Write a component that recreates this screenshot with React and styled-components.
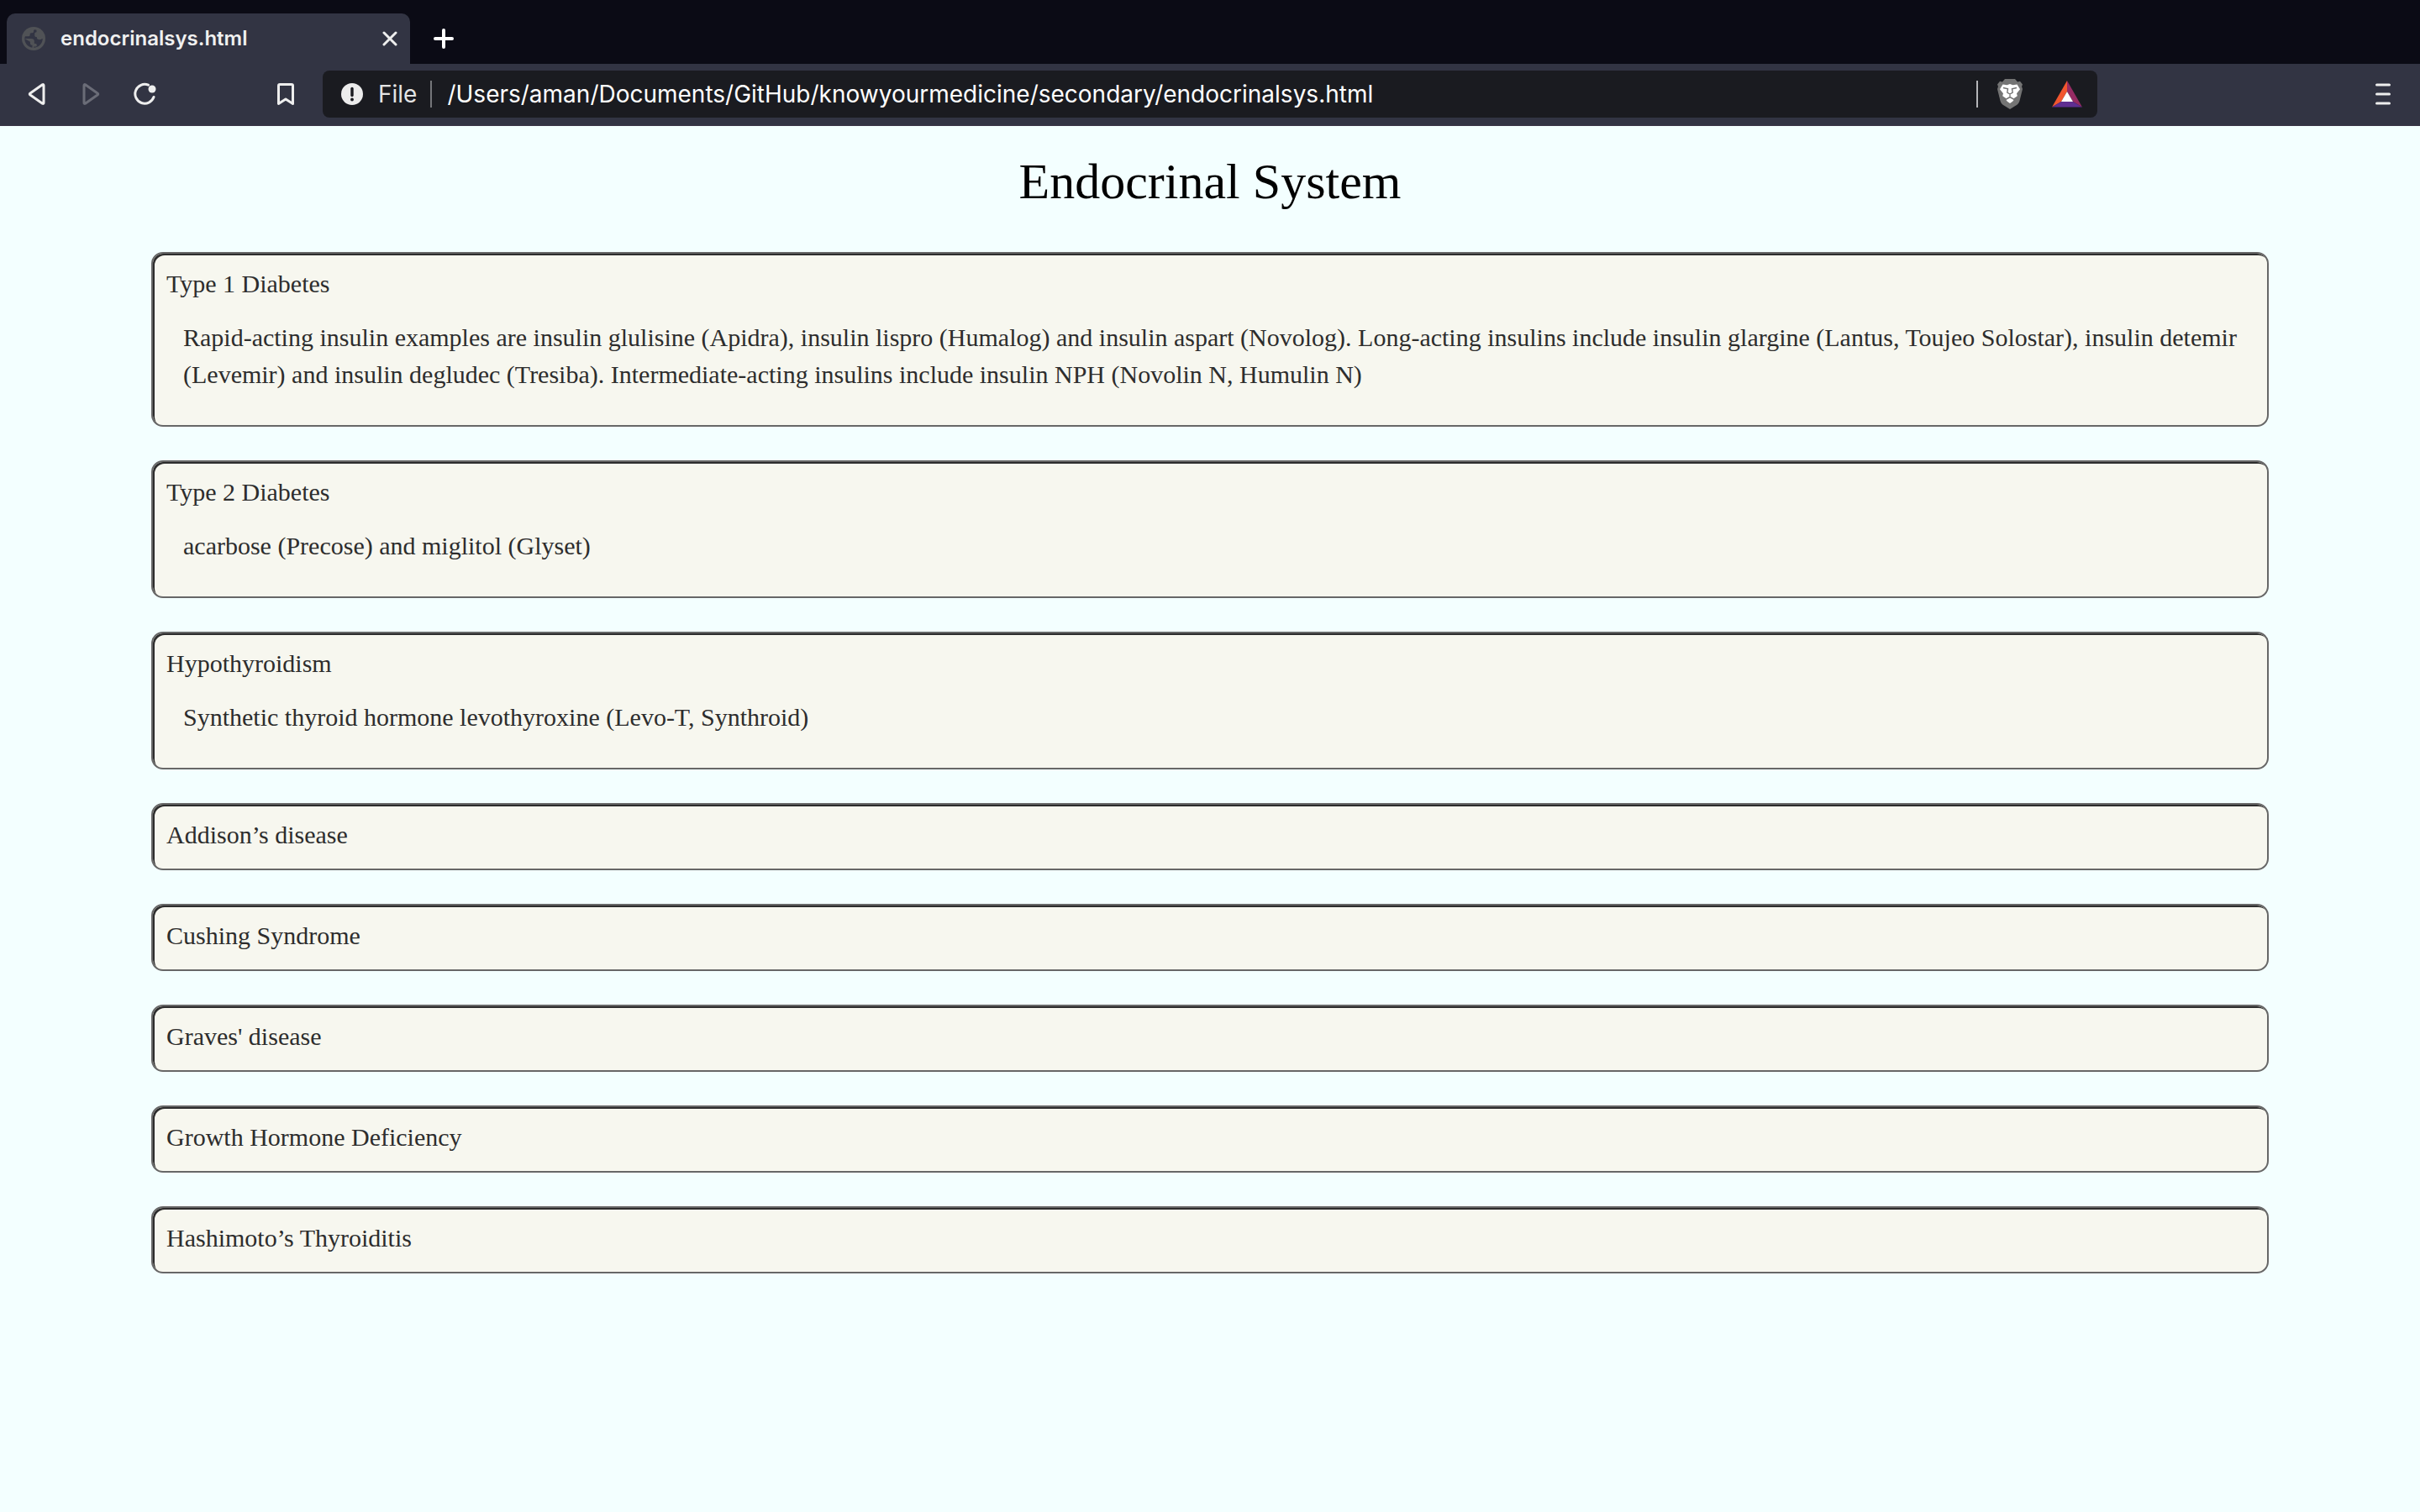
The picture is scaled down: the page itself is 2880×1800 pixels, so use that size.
import React from "react";
import styled, { createGlobalStyle } from "styled-components";

const ui = `Inter, "Liberation Sans", sans-serif`;
const serif = `"Liberation Serif", "Times New Roman", serif`;

const GlobalStyle = createGlobalStyle`
  *, *::before, *::after { box-sizing: border-box; }
  html { background: #f3ffff; }
  body { margin: 0; background: #f3ffff; }
`;

const TabStrip = styled.nav`
  display: flex;
  align-items: center;
  padding: 16px 8px 0;
  background: #0b0b15;
`;

const Tab = styled.div`
  display: flex;
  align-items: center;
  width: 480px;
  height: 60px;
  padding: 0 10px 0 18px;
  border-radius: 10px 10px 0 0;
  background: #323443;
`;

const TabTitle = styled.span`
  flex: 1;
  margin-left: 18px;
  color: #f0f0f0;
  font: 600 24px/32px ${ui};
`;

const IconButton = styled.button`
  display: flex;
  align-items: center;
  justify-content: center;
  width: ${(p) => p.$size || 64}px;
  height: ${(p) => Math.min(p.$size || 64, 56)}px;
  padding: 0;
  border: 0;
  background: transparent;
  color: #eeeeee;

  &:disabled { color: #6a6c77; }
`;

const NewTab = styled(IconButton)`
  margin-left: 20px;
  color: #ffffff;
`;

const Toolbar = styled.div`
  display: flex;
  align-items: center;
  padding: 8px 16px 9px 12px;
  border-bottom: 1px solid #393344;
  background: #323443;
`;

const NavButtons = styled.div`
  display: flex;
  width: 296px;
`;

const AddressBar = styled.div`
  display: flex;
  flex: 1;
  align-items: center;
  height: 56px;
  margin: 0 312px 0 12px;
  padding: 0 6px 0 22px;
  border-radius: 8px;
  background: #1a1b20;
`;

const Scheme = styled.label`
  margin: 0 16px 0 18px;
  color: #e4e4e4;
  font: 400 28px/36px ${ui};
`;

const Divider = styled.span`
  width: 2px;
  height: 32px;
  background: ${(p) => p.$color};
`;

const Address = styled.input`
  flex: 1;
  min-width: 0;
  padding: 0 18px;
  border: 0;
  outline: 0;
  background: transparent;
  color: #ffffff;
  font: 400 28px/36px ${ui};
`;

const Main = styled.main`
  padding: 32px 180px 40px;
  font-family: ${serif};
`;

const Title = styled.h1`
  margin: 0 0 50px;
  color: #000000;
  font-size: 60px;
  font-weight: 400;
  line-height: 68px;
  text-align: center;
`;

const CardList = styled.div`
  display: grid;
  gap: 40px;
`;

const Card = styled.section`
  padding: 14px 16px 18px;
  border: 2px solid #676767;
  border-radius: 14px;
  background: #f7f7ef;
  box-shadow: inset 2px 2px 0 #2d2d2d;
  color: #2d2d2d;
`;

const CardTitle = styled.h2`
  margin: 0;
  font-size: 30px;
  font-weight: 400;
  line-height: 44px;
`;

const CardText = styled.p`
  margin: 20px 0 20px 20px;
  font-size: 30px;
  line-height: 44px;
`;

const conditions = [
  {
    name: "Type 1 Diabetes",
    text: "Rapid-acting insulin examples are insulin glulisine (Apidra), insulin lispro (Humalog) and insulin aspart (Novolog). Long-acting insulins include insulin glargine (Lantus, Toujeo Solostar), insulin detemir (Levemir) and insulin degludec (Tresiba). Intermediate-acting insulins include insulin NPH (Novolin N, Humulin N)",
  },
  { name: "Type 2 Diabetes", text: "acarbose (Precose) and miglitol (Glyset)" },
  { name: "Hypothyroidism", text: "Synthetic thyroid hormone levothyroxine (Levo-T, Synthroid)" },
  { name: "Addison’s disease" },
  { name: "Cushing Syndrome" },
  { name: "Graves' disease" },
  { name: "Growth Hormone Deficiency" },
  { name: "Hashimoto’s Thyroiditis" },
];

const Stroke = ({ w, h, children, width = 3 }) => (
  <svg width={w} height={h} viewBox={`0 0 ${w} ${h}`} fill="none" stroke="currentColor"
    strokeWidth={width} strokeLinecap="round" strokeLinejoin="round" aria-hidden="true">
    {children}
  </svg>
);

const Globe = () => (
  <svg width="28" height="28" viewBox="0 0 28 28" aria-hidden="true">
    <circle cx="14" cy="14" r="14" fill="#505256" />
    <path fill="#323443" d="M15.500 3.200c-1.500 0-1.500 1-1.500 2.300 0 1.500-1.300 1.800-2.800 1.800-1.300 0-1.500.8-1.500 2.200 0 1.500-1.200 1.800-3 1.800H4c-.5 1.300-.7 2-.7 2.800H11c2.500 0 3.800 1.200 3.800 3.200v1.600c0 .9.500 1.200 1.300 1.200 1.300 0 1.700.6 1.700 1.800 0 1-.7 1.500-1.800 1.500h-1.800v1.300C20 24.700 24.700 20 24.700 14h-.6c-1 .8-2 1.200-3.300 1.200-2.700 0-3-1.400-3-3.100-2 0-2.600-.8-2.600-2.200V8.500c0-1.500.8-2.300 2.300-2.300V3.800c-.6-.3-1.300-.6-2-.6z" />
    <path fill="#323443" d="M3.300 14c0 5.500 4 10 9.200 10.700v-2.900c-1.600 0-2.600-1-2.600-2.600v-1.400z" />
  </svg>
);

const Info = () => (
  <svg width="26" height="26" viewBox="0 0 26 26" aria-hidden="true">
    <circle cx="13" cy="13" r="13" fill="#ececec" />
    <path d="M13 6.500v8" stroke="#1a1b20" strokeWidth="3.400" strokeLinecap="round" />
    <circle cx="13" cy="19.500" r="1.900" fill="#1a1b20" />
  </svg>
);

const Lion = () => (
  <svg width="32" height="36" viewBox="0 0 32 36" aria-hidden="true">
    <path fill="#747474" d="M10 0h12l3 3.400 3-.6 3 3.600-1 2.600 1 3-3.500 14c-.6 2.200-1.600 3.600-3.500 5L16 36l-8-5c-1.900-1.400-2.900-2.800-3.500-5L1 12l1-3-1-2.600 3-3.600 3 .6z" />
    <path fill="#fff" d="M7.500 6.500l5 .8L16 6l3.500 1.300 5-.8 3.500 5.700-4 5 .8 3-4.300 3-3-1.700L16 20.300l-1.500 1.200-3 1.700-4.300-3 .8-3-4-5z" />
    <path fill="#fff" d="M16 22.500l4.500 2.500-1.300 1.700L16 29l-3.200-2.300L11.500 25z" />
    <path fill="none" stroke="#747474" strokeWidth="1.400" d="M8 10.500l5.500 1.200-.7 4.500L16 18l3.200-1.800-.7-4.500L24 10.500M16 18v2.500" />
  </svg>
);

const Triangle = () => (
  <svg width="36" height="32" viewBox="0 0 36 32" aria-hidden="true">
    <path fill="#f1562f" d="M18 0L0 31.500 11 25l7-12z" />
    <path fill="#952b63" d="M18 0l18 31.500L25 25l-7-12z" />
    <path fill="#5f2e91" d="M0 31.500h36L25 25H11z" />
    <path fill="#fff" d="M18 13l7 12H11z" />
  </svg>
);

export default function App() {
  return (
    <>
      <GlobalStyle />
      <header>
        <TabStrip aria-label="Tabs">
          <Tab>
            <Globe />
            <TabTitle>endocrinalsys.html</TabTitle>
            <IconButton $size={28} aria-label="Close tab">
              <Stroke w={18} h={18}><path d="M2 2l14 14M16 2L2 16" /></Stroke>
            </IconButton>
          </Tab>
          <NewTab $size={40} aria-label="New tab">
            <Stroke w={26} h={26} width={4}><path d="M13 3v20M3 13h20" /></Stroke>
          </NewTab>
        </TabStrip>
        <Toolbar>
          <NavButtons>
            <IconButton aria-label="Back">
              <Stroke w={22} h={28}><path d="M17.500 2.800q1.500-.8 1.500 1v20.400q0 1.800-1.500 1L3 15q-1.500-1 0-2z" /></Stroke>
            </IconButton>
            <IconButton aria-label="Forward" disabled>
              <Stroke w={22} h={28}><path d="M4.500 2.800q-1.500-.8-1.500 1v20.400q0 1.800 1.500 1L19 15q1.500-1 0-2z" /></Stroke>
            </IconButton>
            <IconButton aria-label="Reload">
              <Stroke w={28} h={28}>
                <path d="M18.500 3.200A11.400 11.400 0 1 0 25 17.500" />
                <circle cx="23" cy="8" r="4.500" fill="currentColor" stroke="none" />
              </Stroke>
            </IconButton>
          </NavButtons>
          <IconButton aria-label="Bookmark">
            <Stroke w={22} h={28}><path d="M4 2.500h14q1.500 0 1.500 1.500v21.500L11 20l-8.500 5.500V4q0-1.500 1.500-1.500z" /></Stroke>
          </IconButton>
          <AddressBar>
            <Info />
            <Scheme htmlFor="address">File</Scheme>
            <Divider $color="#75767a" />
            <Address id="address" defaultValue="/Users/aman/Documents/GitHub/knowyourmedicine/secondary/endocrinalsys.html" />
            <Divider $color="#b4b5b8" />
            <IconButton $size={76} aria-label="Shields"><Lion /></IconButton>
            <IconButton $size={60} aria-label="Rewards"><Triangle /></IconButton>
          </AddressBar>
          <IconButton $size={56} aria-label="Menu">
            <Stroke w={22} h={28}><path d="M3.500 3h15M3.500 14h15M3.500 25h15" /></Stroke>
          </IconButton>
        </Toolbar>
      </header>
      <Main>
        <Title>Endocrinal System</Title>
        <CardList>
          {conditions.map(({ name, text }) => (
            <Card key={name}>
              <CardTitle>{name}</CardTitle>
              {text && <CardText>{text}</CardText>}
            </Card>
          ))}
        </CardList>
      </Main>
    </>
  );
}
